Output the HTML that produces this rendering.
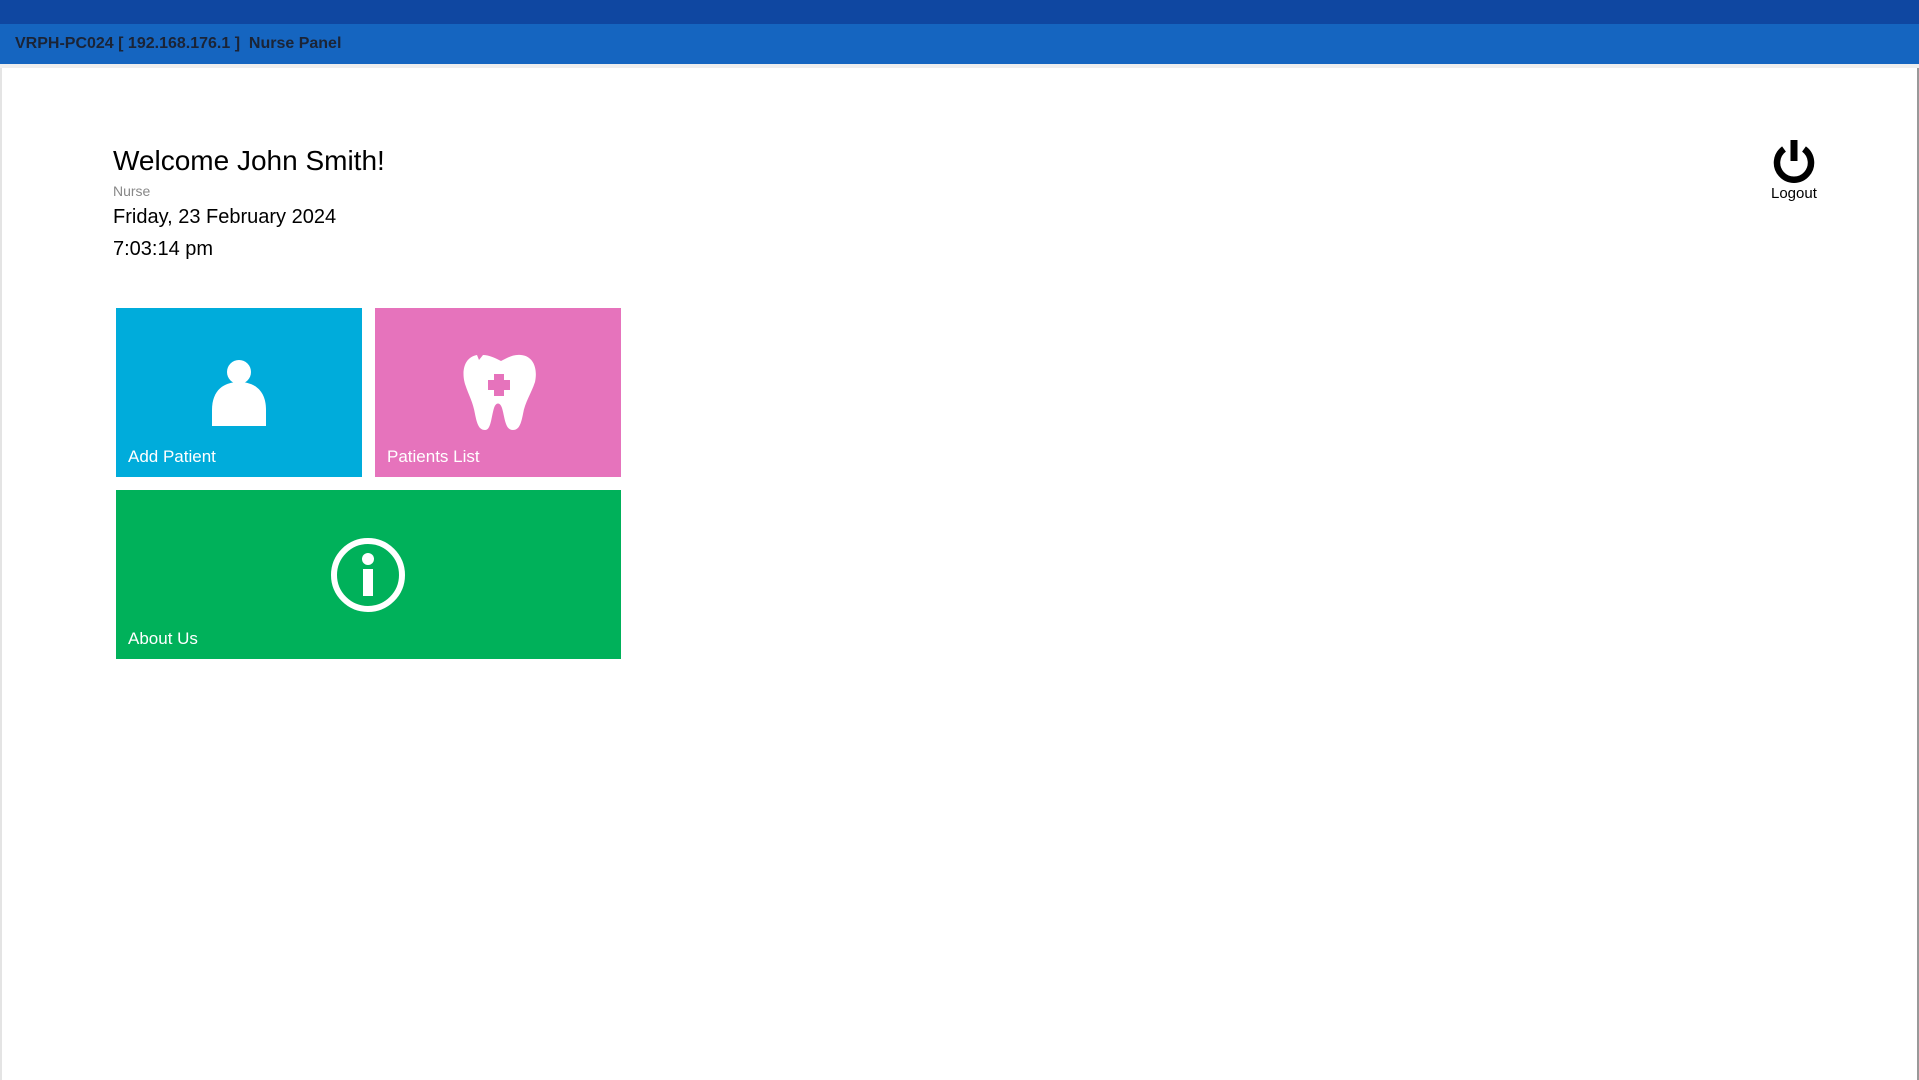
<!DOCTYPE html>
<html><head><meta charset="utf-8"><style>
*{margin:0;padding:0;box-sizing:border-box}
body{width:1919px;height:1080px;background:#fff;position:relative;overflow:hidden;font-family:"Segoe UI","Liberation Sans",sans-serif}
.top{position:absolute;left:0;top:0;width:1919px;height:24px;background:#0f47a1}
.bar{position:absolute;left:0;top:24px;width:1919px;height:40px;background:#1565c0}
.bar span{position:absolute;left:15px;top:11px;font-size:16px;color:#1b2436;font-weight:bold;letter-spacing:0px}
.line{position:absolute;left:0;top:64px;width:1919px;height:4px;background:#eeeeee}
.lb{position:absolute;left:0;top:68px;width:2px;height:1012px;background:#e4e4e4}
.rb{position:absolute;left:1917px;top:68px;width:2px;height:1012px;background:#999}
.t{position:absolute;left:113px;color:#000;white-space:nowrap}
.tile{position:absolute}
.tile .l{position:absolute;left:12px;bottom:10px;color:#fff;font-size:17px;font-weight:300}
</style></head><body>
<div class="top"></div>
<div class="bar"><span>VRPH-PC024 [ 192.168.176.1 ]&nbsp; Nurse Panel</span></div>
<div class="line"></div><div class="lb"></div><div class="rb"></div>
<div class="t" style="top:145px;font-size:28px">Welcome John Smith!</div>
<div class="t" style="top:183px;font-size:14px;color:#888">Nurse</div>
<div class="t" style="top:206px;font-size:20px">Friday, 23 February 2024</div>
<div class="t" style="top:238px;font-size:20px">7:03:14 pm</div>

<div class="tile" style="left:116px;top:308px;width:246px;height:169px;background:#00acdb">
<svg style="position:absolute;left:94px;top:50px" width="58" height="70" viewBox="0 0 58 70"><circle cx="29" cy="14" r="12" fill="#fff"/><path d="M2 68 L2 52 C2 32 14 24 29 24 C44 24 56 32 56 52 L56 68 Z" fill="#fff"/></svg>
<div class="l">Add Patient</div></div>

<div class="tile" style="left:375px;top:308px;width:246px;height:169px;background:#e673bc">
<svg style="position:absolute;left:86px;top:44px" width="80" height="85" viewBox="0 0 80 85"><path d="M16 3 C4 5 0 18 4 32 C8 44 12 50 14 62 C16 72 18 78 24 78 C30 78 30 66 33 56 C35 50 39 50 41 56 C44 66 44 78 52 78 C58 78 60 72 62 62 C64 50 70 42 74 30 C77 16 72 4 60 3 C52 2 46 6 40 9 C34 6 28 3 22 3 L18 8 Z" fill="#fff"/><rect x="33" y="22" width="10" height="22" fill="#e673bc"/><rect x="27" y="28" width="22" height="10" fill="#e673bc"/></svg>
<div class="l">Patients List</div></div>

<div class="tile" style="left:116px;top:490px;width:505px;height:169px;background:#00b15a">
<svg style="position:absolute;left:212px;top:45px" width="80" height="80" viewBox="0 0 80 80"><circle cx="40" cy="40" r="34" fill="none" stroke="#fff" stroke-width="6"/><circle cx="40" cy="24" r="6" fill="#fff"/><rect x="35" y="34" width="10" height="27" fill="#fff"/></svg>
<div class="l">About Us</div></div>

<svg style="position:absolute;left:1771px;top:139px" width="46" height="46" viewBox="0 0 46 46"><path d="M13 10 A17 17 0 1 0 33 10" fill="none" stroke="#000" stroke-width="6.5"/><rect x="19.5" y="1" width="7" height="21" fill="#000"/></svg>
<div style="position:absolute;left:1771px;top:185px;font-size:15px;color:#000">Logout</div>
</body></html>
